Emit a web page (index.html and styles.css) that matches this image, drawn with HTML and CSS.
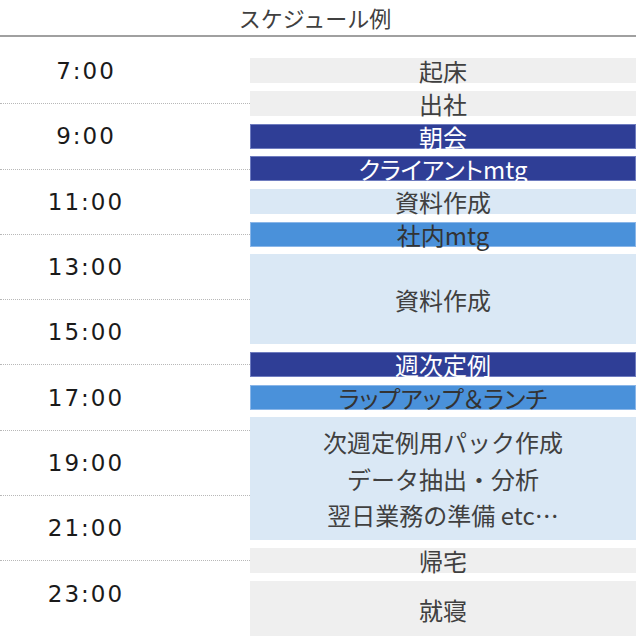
FILE: index.html
```html
<!DOCTYPE html>
<html lang="ja">
<head>
<meta charset="utf-8">
<title>スケジュール例</title>
<link rel="stylesheet" href="styles.css">
</head>
<body>
<div class="page">
  <header class="title">スケジュール例</header>
  <main class="schedule">
    <div class="times">
      <div class="hour">7:00</div>
      <div class="hour">9:00</div>
      <div class="hour">11:00</div>
      <div class="hour">13:00</div>
      <div class="hour">15:00</div>
      <div class="hour">17:00</div>
      <div class="hour">19:00</div>
      <div class="hour">21:00</div>
      <div class="hour last">23:00</div>
    </div>
    <div class="blocks">
      <div class="block gray">起床</div>
      <div class="block gray">出社</div>
      <div class="block navy">朝会</div>
      <div class="block navy">クライアントmtg</div>
      <div class="block pale">資料作成</div>
      <div class="block mid">社内mtg</div>
      <div class="block pale span3">資料作成</div>
      <div class="block navy">週次定例</div>
      <div class="block mid">ラップアップ＆ランチ</div>
      <div class="block pale span4 multi">次週定例用パック作成<br>データ抽出・分析<br>翌日業務の準備 etc…</div>
      <div class="block gray">帰宅</div>
      <div class="block gray span2">就寝</div>
    </div>
  </main>
</div>
</body>
</html>
```

FILE: styles.css
```css
html, body {
  margin: 0;
  padding: 0;
  background: #ffffff;
}

body {
  width: 636px;
  height: 636px;
  overflow: hidden;
  font-family: "Noto Sans CJK JP", "Noto Sans", sans-serif;
}

.page {
  width: 636px;
}

.title {
  height: 35px;
  line-height: 35px;
  border-bottom: 2px solid #a0a0a0;
  text-align: center;
  font-size: 22px;
  color: #404040;
  padding-right: 6px;
  box-sizing: content-box;
}

.schedule {
  display: grid;
  grid-template-columns: 250px 1fr;
}

.times {
  padding-top: 2px;
}

.hour {
  box-sizing: border-box;
  height: 65.3px;
  border-bottom: 1px dotted #b8b8b8;
  display: flex;
  align-items: center;
  justify-content: center;
  padding-right: 78px;
  font-family: "DejaVu Sans", sans-serif;
  font-size: 23px;
  letter-spacing: 2px;
  color: #1a1a1a;
}

.hour.last {
  border-bottom: none;
}

.blocks {
  padding-top: 21.3px;
  display: grid;
  grid-template-rows: repeat(18, 25px);
  row-gap: 7.65px;
}

.block {
  box-sizing: border-box;
  display: flex;
  align-items: center;
  justify-content: center;
  text-align: center;
  font-size: 24px;
  line-height: 25px;
  color: #404040;
  font-feature-settings: "palt";
  white-space: nowrap;
}

.gray {
  background: #efefef;
}

.pale {
  background: #dae8f5;
}

.navy {
  background: #2f3e96;
  color: #ffffff;
  border: 1px solid #6f7cbf;
}

.mid {
  background: #4a91da;
  color: #333333;
  border: 1px solid #8ab6e8;
}

.span2 { grid-row: span 2; }
.span3 { grid-row: span 3; }
.span4 { grid-row: span 4; }

.multi {
  line-height: 36.5px;
  font-feature-settings: normal;
}
```
